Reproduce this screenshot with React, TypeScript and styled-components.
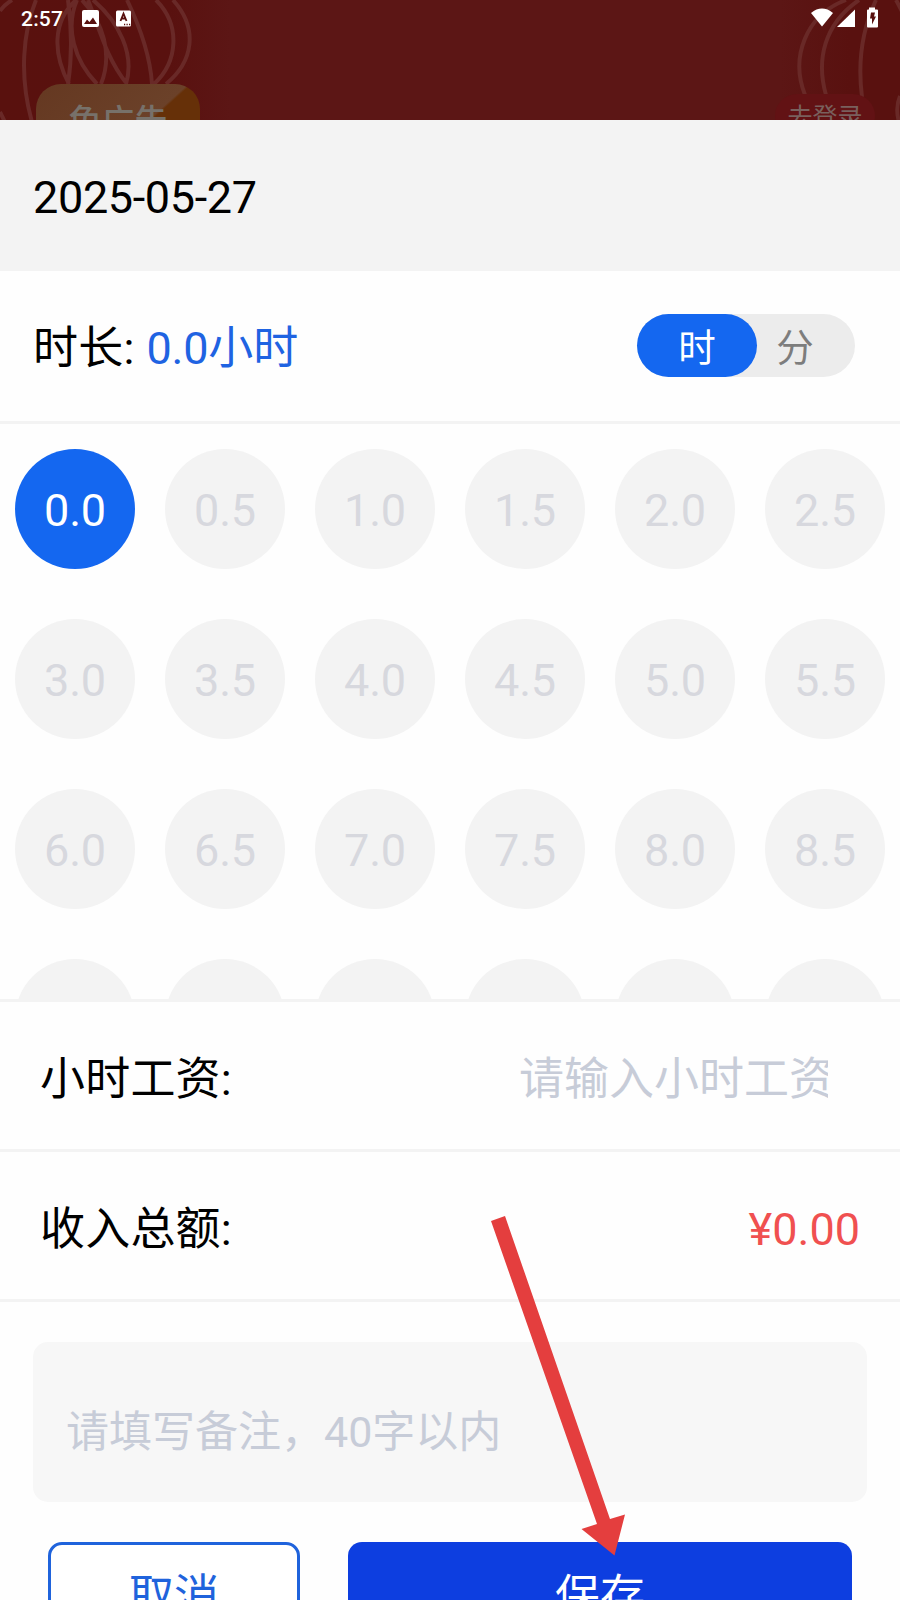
import React, { useState } from "react";
import styled, { createGlobalStyle } from "styled-components";

const Global = createGlobalStyle`
  *, *::before, *::after { box-sizing: border-box; }
  html, body { margin: 0; padding: 0; background: #fefefe; }
  body { font-family: Roboto, "Noto Sans CJK SC", sans-serif; color: #000; }
  button { font-family: inherit; }
`;

const Screen = styled.main`
  position: relative;
  display: flex;
  flex-direction: column;
  width: 900px;
  height: 1600px;
  overflow: hidden;
  background: #fefefe;
  font-size: 45px;
  line-height: 1;
`;

const Backdrop = styled.header`
  position: relative;
  flex: none;
  height: 120px;
  overflow: hidden;
  background: linear-gradient(90deg, #59110e 0, #59110f 170px, #5c1615 230px, #5c1615 780px, #59110f 850px);
`;

const Swirls = styled.svg`
  position: absolute;
  inset: 0;
`;

const StatusBar = styled.div`
  position: relative;
  display: flex;
  align-items: center;
  height: 36px;
  padding: 0 20px 0 21px;
  color: #fff;
`;

const Clock = styled.span`
  width: 60px;
  padding-top: 2px;
  font-size: 21px;
  font-weight: 500;
  letter-spacing: 0.2px;
`;

const StatusIcons = styled.div<{ $end?: boolean }>`
  display: flex;
  margin-left: ${(p) => (p.$end ? "auto" : "0")};
`;

const AdBadge = styled.div`
  position: absolute;
  left: 36px;
  top: 84px;
  width: 164px;
  height: 60px;
  padding-top: 21px;
  border-radius: 25px;
  background: linear-gradient(138deg, #653821 0, #6b4129 66%, #663008 67.5%);
  color: #77716a;
  font-size: 33px;
  font-weight: 500;
  text-align: center;
`;

const LoginPill = styled.div`
  position: absolute;
  left: 775px;
  top: 94px;
  width: 100px;
  height: 44px;
  padding-top: 11px;
  border-radius: 22px;
  background: #621214;
  color: #79605d;
  font-size: 25px;
  text-align: center;
`;

const DateBar = styled.div`
  display: flex;
  flex: none;
  align-items: center;
  height: 151px;
  padding: 4px 33px 0;
  background: #f3f3f3;
  letter-spacing: -0.35px;
`;

const Row = styled.div<{ $height: number; $inset: number; $drop: number }>`
  display: flex;
  flex: none;
  align-items: center;
  justify-content: space-between;
  height: ${(p) => p.$height}px;
  padding: ${(p) => p.$drop}px ${(p) => p.$inset}px 0;
  border-bottom: 3px solid #f3f3f3;
`;

const Label = styled.span<{ $drop?: number }>`
  padding-top: ${(p) => p.$drop ?? 0}px;
  letter-spacing: 0.2px;
`;

const Duration = styled.span`
  margin-left: 12px;
  color: #1f63e2;
  letter-spacing: -0.2px;
`;

const Toggle = styled.div`
  display: flex;
  width: 218px;
  height: 63px;
  margin: 0 12px 2px 0;
  border-radius: 32px;
  background: #ececec;
`;

const ToggleOption = styled.button<{ $active: boolean }>`
  width: ${(p) => (p.$active ? 120 : 76)}px;
  padding: 7px 0 0;
  border: 0;
  border-radius: 32px;
  background: ${(p) => (p.$active ? "#1467f0" : "transparent")};
  color: ${(p) => (p.$active ? "#fff" : "#7d7d7d")};
  font-size: 37.5px;
  line-height: 1;
`;

const HourGrid = styled.div`
  display: grid;
  flex: none;
  grid-template-columns: repeat(6, 120px);
  grid-auto-rows: 120px;
  gap: 50px 30px;
  height: 578px;
  padding: 25px 15px 0;
  overflow: hidden;
  border-bottom: 3px solid #f3f3f3;
`;

const Hour = styled.button<{ $active: boolean }>`
  padding: 2px 0 0;
  border: 0;
  border-radius: 50%;
  background: ${(p) => (p.$active ? "#1467f0" : "#f3f3f3")};
  color: ${(p) => (p.$active ? "#fff" : "#d7d8de")};
  font-size: 45px;
  letter-spacing: -0.2px;
  line-height: 1;
`;

const WagePlaceholder = styled.span`
  width: 309px;
  margin-right: 32px;
  overflow: hidden;
  color: #c7ccd8;
  line-height: 60px;
  white-space: nowrap;
`;

const Total = styled.span`
  margin-top: -1px;
  color: #f05050;
`;

const Remark = styled.div`
  display: flex;
  flex: none;
  align-items: center;
  height: 160px;
  margin: 40px 33px 0;
  padding: 20px 33px 0;
  border-radius: 15px;
  background: #f7f7f7;
  color: #c7ccd8;
  font-size: 43px;
`;

const Actions = styled.div`
  display: flex;
  flex: none;
  gap: 48px;
  padding: 40px 48px 0;
`;

const Action = styled.button<{ $primary?: boolean }>`
  width: ${(p) => (p.$primary ? 504 : 252)}px;
  height: 105px;
  padding: 4px 0 0;
  border: ${(p) => (p.$primary ? "0" : "3px solid #1f63dc")};
  border-radius: 14px;
  background: ${(p) => (p.$primary ? "#0d3ee0" : "#fff")};
  color: ${(p) => (p.$primary ? "#fff" : "#1f63dc")};
  font-size: 45px;
  line-height: 1;
`;

const Pointer = styled.svg`
  position: absolute;
  left: 485px;
  top: 1210px;
`;

const hours = Array.from({ length: 24 }, (_, i) => i / 2);

export default function App() {
  const [selected, setSelected] = useState(0);
  const [unit, setUnit] = useState("时");

  return (
    <Screen>
      <Global />
      <Backdrop>
        <Swirls width="900" height="120" fill="none" stroke="#692927" strokeWidth="4">
          <path d="M12 0Q4 5 0 11M36 0C23 32 19 76 32 122M0 112L5 122" />
          <path d="M76 0C52 22 53 54 69 84M77 0C65 28 74 60 97 84M68 0C72 30 72 58 68 84" />
          <path d="M82 0C103 22 113 54 101 84M88 0C99 27 106 58 127 84M93 0C119 22 135 54 126 84" />
          <path d="M127 0C139 25 150 53 152 84M156 0C181 25 178 62 154 84M173 0C199 29 193 62 166 84" />
          <path d="M846 0C806 15 790 57 805 95M859 0C824 24 816 60 826 95M876 0C861 32 858 66 862 97M896 0Q900 7 904 16M900 96Q895 108 899 122" />
        </Swirls>
        <AdBadge>免广告</AdBadge>
        <LoginPill>去登录</LoginPill>
        <StatusBar>
          <Clock>2:57</Clock>
          <StatusIcons>
            <svg width="52" height="20" viewBox="0 0 52 20">
              <rect x="1" y="2" width="17" height="17" rx="2" fill="#fff" />
              <path d="M3 16L6 11.5l2.5 2.5 3.5-4.5 4 6.5z" fill="#58100e" />
              <rect x="35" y="2.5" width="15" height="16" rx="1.5" fill="#fff" />
              <path d="M39.5 13L42.5 5.7L45.5 13M40.5 10.5H44.5" fill="none" stroke="#58100e" strokeWidth="1.8" />
              <path d="M43 16.5h1.2M45.5 16.5h1.2M48 16.5h1.2" stroke="#58100e" strokeWidth="1.3" />
            </svg>
          </StatusIcons>
          <StatusIcons $end>
            <svg width="70" height="22" viewBox="810 6.5 70 22">
              <path d="M811 12.4Q822 3.6 833 12.4L822 26z" fill="#fff" />
              <path d="M855 9V26.5H837z" fill="#fff" />
              <path d="M869 7h6v2h2a1 1 0 0 1 1 1v16a1 1 0 0 1-1 1h-9a1 1 0 0 1-1-1v-16a1 1 0 0 1 1-1h1z" fill="#fff" />
              <path d="M871 12h4l-1 4h2l-4 8v-6h-2z" fill="#58100e" />
            </svg>
          </StatusIcons>
        </StatusBar>
      </Backdrop>

      <DateBar>2025-05-27</DateBar>

      <Row $height={153} $inset={33} $drop={0}>
        <Label $drop={4}>
          时长:<Duration>{selected.toFixed(1)}小时</Duration>
        </Label>
        <Toggle>
          {["时", "分"].map((u) => (
            <ToggleOption key={u} $active={u === unit} onClick={() => setUnit(u)}>
              {u}
            </ToggleOption>
          ))}
        </Toggle>
      </Row>

      <HourGrid>
        {hours.map((h) => (
          <Hour key={h} $active={h === selected} onClick={() => setSelected(h)}>
            {h.toFixed(1)}
          </Hour>
        ))}
      </HourGrid>

      <Row $height={150} $inset={40} $drop={8}>
        <Label>小时工资:</Label>
        <WagePlaceholder>请输入小时工资</WagePlaceholder>
      </Row>
      <Row $height={150} $inset={40} $drop={8}>
        <Label>收入总额:</Label>
        <Total>¥0.00</Total>
      </Row>

      <Remark>请填写备注，40字以内</Remark>

      <Actions>
        <Action>取消</Action>
        <Action $primary>保存</Action>
      </Actions>

      <Pointer width="145" height="350" viewBox="485 1210 145 350">
        <path d="M491 1221L505 1216L610 1519L625 1514.5L614.5 1555.5L581.5 1529L597 1524z" fill="#e43e3e" />
      </Pointer>
    </Screen>
  );
}
